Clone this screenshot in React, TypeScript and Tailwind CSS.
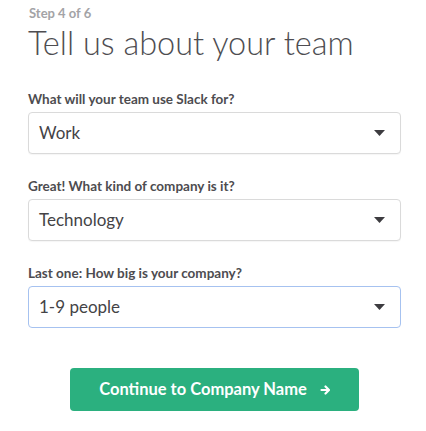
function Select({ label, value, focused }: { label: string; value: string; focused?: boolean }) {
  return (
    <div className="flex flex-col">
      <label className="text-[13.5px] font-bold leading-[18px] text-[#4d4c50]">{label}</label>
      <div
        className={
          focused
            ? 'mt-[4px] flex h-[42px] items-center justify-between rounded-[4px] border border-[#a6c2f0] bg-white pl-[10px] pr-[15px]'
            : 'mt-[4px] flex h-[42px] items-center justify-between rounded-[4px] border border-[#dadada] bg-white pl-[10px] pr-[15px] shadow-[0_1px_1px_rgba(0,0,0,0.04)]'
        }
      >
        <span className="text-[17px] text-[#444346]">{value}</span>
        <svg width="11" height="6" viewBox="0 0 11 6" className="fill-[#3d3c40]">
          <path d="M0 0h11L5.5 6z" />
        </svg>
      </div>
    </div>
  )
}

export default function App() {
  return (
    <div className="min-h-screen bg-white pl-[28px] pr-[25px] pt-[5px] font-['Lato',sans-serif] text-[#3d3c40]">
      <div className="pl-[1px] text-[13px] font-bold leading-[16px] text-[#a3a3a6]">Step 4 of 6</div>
      <h1 className="mt-[2px] text-[32.5px] font-light leading-[40px] text-[#4e4d51]">Tell us about your team</h1>

      <div className="mt-[27px] flex flex-col gap-[23px]">
        <Select label="What will your team use Slack for?" value="Work" />
        <Select label="Great! What kind of company is it?" value="Technology" />
        <Select label="Last one: How big is your company?" value="1-9 people" focused />
      </div>

      <div className="mt-[40px] flex justify-center">
        <button className="flex h-[43px] w-[289px] items-center justify-center gap-[13px] rounded-[4px] bg-[#2bb07f] text-[16.5px] font-bold text-white">
          Continue to Company Name
          <svg width="10" height="10" viewBox="0 0 10 10" fill="none" stroke="white" strokeWidth="2.2" strokeLinecap="round" strokeLinejoin="round">
            <path d="M1.5 5h7M5.5 1.5L9 5 5.5 8.5" />
          </svg>
        </button>
      </div>
    </div>
  )
}
